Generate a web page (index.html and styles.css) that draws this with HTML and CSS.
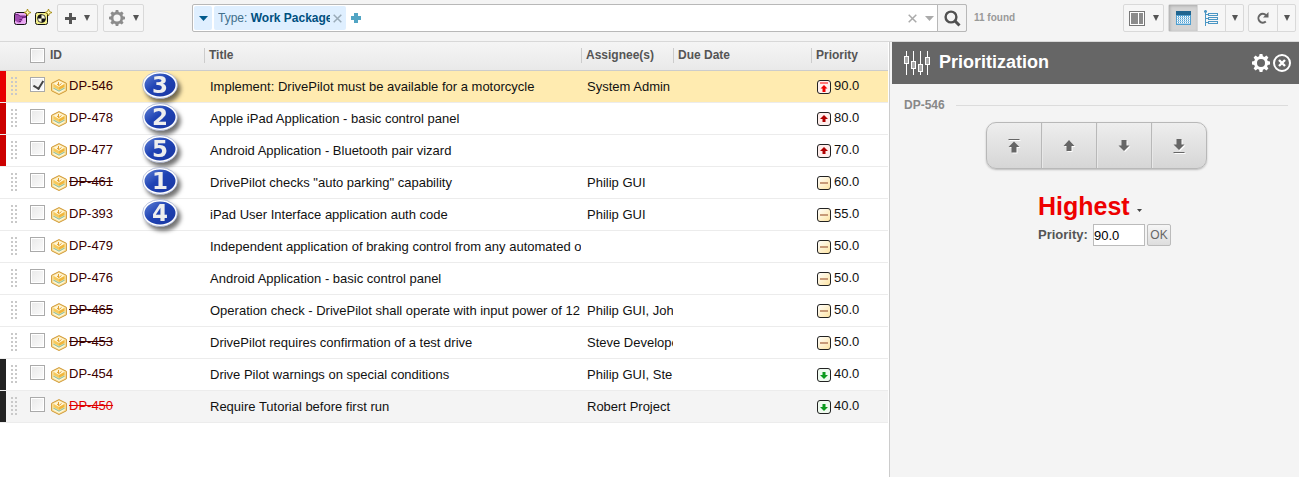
FILE: index.html
```html
<!DOCTYPE html>
<html lang="en">
<head>
<meta charset="utf-8">
<title>Work Packages</title>
<link rel="stylesheet" href="styles.css">
</head>
<body>
<svg class="defs" aria-hidden="true">
  <defs>
    <linearGradient id="blue" x1="0" y1="0" x2="1" y2="1"><stop offset="0" stop-color="#6485d8"/><stop offset=".45" stop-color="#1f43b4"/><stop offset="1" stop-color="#1a36a0"/></linearGradient>
    <linearGradient id="cream" x1="0" y1="0" x2="1" y2="1"><stop offset="0" stop-color="#fff"/><stop offset="1" stop-color="#fde3a0"/></linearGradient>
    <symbol id="box" viewBox="0 0 16 16"><path d="M8 .6 15.400 4.300V11.800L8 15.500.6 11.800V4.300Z" fill="#fbe3a0" stroke="#cf9836"/><path d="M2.500 4.800 8 7.800 13.500 4.800 8 2Z" fill="#fff6da"/><path d="M2.500 5 8 8V11L2.500 8Z" fill="#f6c95c"/><path d="M8 8 13.500 5V8L8 11Z" fill="#f0b63c"/><path d="M2.500 8.500 8 11.500 13.500 8.500V9.700L8 12.700 2.500 9.700Z" fill="#8cc3ae"/><path d="M2.500 10.500 8 13.500 13.500 10.500" stroke="#fffbe8" fill="none"/><path d="M7.500 3V6.500M6 5 8 6.500 10.500 4.500" stroke="#e2a02c" fill="none"/></symbol>
    <symbol id="top" viewBox="0 0 14 14"><rect x=".5" y=".5" width="13" height="13" rx="2.500" fill="#fff0ee" stroke="#222"/><path d="M3 3H11" stroke="#f77" stroke-width="2"/><path d="M7 5 10.500 8.500H8.500V12H5.500V8.500H3.500Z" fill="#e00"/></symbol>
    <symbol id="up" viewBox="0 0 14 14"><rect x=".5" y=".5" width="13" height="13" rx="2.500" fill="#ffeeec" stroke="#222"/><path d="M7 3 11 7H8.500V10H5.500V7H3Z" fill="#b00000"/></symbol>
    <symbol id="mid" viewBox="0 0 14 14"><rect x=".5" y=".5" width="13" height="13" rx="2.500" fill="url(#cream)" stroke="#222"/><path d="M3 7H11" stroke="#c79a78" stroke-width="2"/></symbol>
    <symbol id="down" viewBox="0 0 14 14"><rect x=".5" y=".5" width="13" height="13" rx="2.500" fill="#effaef" stroke="#222"/><path d="M7 11 11 7H8.500V4H5.500V7H3Z" fill="#0a9a1c"/></symbol>
    <symbol id="gear" viewBox="0 0 18 18"><path fill-rule="evenodd" d="M7.600 0h2.800l.5 2.300 1.500.6 2-1.300 2 2-1.300 2 .6 1.500 2.300.5v2.800l-2.300.5-.6 1.500 1.300 2-2 2-2-1.300-1.500.6-.5 2.300H7.600l-.5-2.300-1.500-.6-2 1.300-2-2 1.300-2-.6-1.500L0 10.400V7.600l2.300-.5.6-1.500-1.300-2 2-2 2 1.300 1.500-.6ZM9 5a4 4 0 1 0 0 8 4 4 0 0 0 0-8Z"/></symbol>
    <symbol id="caret" viewBox="0 0 6 6"><path d="M0 0H6L3 6Z"/></symbol>
    <symbol id="grip" viewBox="0 0 6 18"><path d="M1 0V18M5 0V18" stroke="#c9c9c9" stroke-width="2" stroke-dasharray="2 2"/></symbol>
    <symbol id="disc" viewBox="0 0 36 28"><ellipse cx="18" cy="14" rx="16.500" ry="12.500" fill="url(#blue)" stroke="#fff" stroke-width="2"/><ellipse cx="18" cy="14" rx="17.500" ry="13.500" fill="none" stroke="#8e9cc8" stroke-width=".6"/></symbol>
    <symbol id="spark" viewBox="0 0 7 7"><path d="M3.500 0 4.500 2.500 7 3.500 4.500 4.500 3.500 7 2.500 4.500 0 3.500 2.500 2.500Z" fill="#fff8b0" stroke="#9b8000" stroke-width=".8"/></symbol>
  </defs>
</svg>

<header class="toolbar">
  <button class="mini" type="button" aria-label="Pick work package"><svg width="18" height="18"><rect x="1.500" y="3.500" width="12" height="12" rx="2" fill="#eaa8f2" stroke="#111"/><path d="M2 5.500H5L7 7H12.500V8.500H9.500L10.500 9.500 9 10.500 9.500 11.500 8 12.500 7.500 13.500H5L2 11.500Z" fill="#a04cb0"/><path d="M2 5.500H5L7 7H12.500V8.500H9M9 10.500H6.500M8 12.500H6" stroke="#5a1068" stroke-width=".8" fill="none"/><use href="#spark" x="11" y="0" width="7" height="7"/></svg></button>
  <button class="mini" type="button" aria-label="New test"><svg width="18" height="18"><rect x="1.500" y="3.500" width="12" height="12" rx="2" fill="#f3f08a" stroke="#111"/><circle cx="7.500" cy="9.500" r="4" fill="#fffde0" stroke="#111" stroke-width=".8"/><path d="M7.500 9.500V5.500A4 4 0 0 0 3.500 9.500ZM7.500 9.500V13.500A4 4 0 0 0 11.500 9.500Z" fill="#111"/><use href="#spark" x="11" y="0" width="7" height="7"/></svg></button>
  <button class="tool" type="button" aria-label="Add"><svg width="11" height="11"><path d="M4 0H7V4H11V7H7V11H4V7H0V4H4Z" fill="#555"/></svg><svg class="car" width="6" height="6"><use href="#caret"/></svg></button>
  <button class="tool" type="button" aria-label="Settings"><svg width="16" height="16" fill="#8c8c8c"><use href="#gear"/></svg><svg class="car" width="6" height="6"><use href="#caret"/></svg></button>

  <div class="search">
    <button class="chip chip-menu" type="button" aria-label="Saved queries"><svg width="9" height="5"><path d="M0 0H9L4.500 5Z" fill="#005a8c"/></svg></button>
    <div class="chip"><span class="chip-text">Type: <b>Work Package</b></span><button class="bare" type="button" aria-label="Remove filter"><svg width="9" height="9"><path d="M.7.700 8.300 8.300M8.300.700.700 8.300" stroke="#9aabb8" stroke-width="1.500"/></svg></button></div>
    <button class="bare add" type="button" aria-label="Add filter"><svg width="10" height="10"><path d="M3 0H7V3H10V7H7V10H3V7H0V3H3Z" fill="#52a5c4"/></svg></button>
    <input class="query" type="text" aria-label="Search">
    <button class="bare" type="button" aria-label="Clear"><svg width="9" height="9"><path d="M.7.700 8.300 8.300M8.300.700.700 8.300" stroke="#aaa" stroke-width="1.500"/></svg></button>
    <button class="bare history" type="button" aria-label="History"><svg width="9" height="5"><path d="M0 0H9L4.500 5Z" fill="#aaa"/></svg></button>
    <button class="go" type="button" aria-label="Search"><svg width="17" height="17" fill="none" stroke="#505050"><circle cx="7" cy="7" r="5.400" stroke-width="2.400"/><path d="M11 11 15.500 15.500" stroke-width="3"/></svg></button>
  </div>
  <span class="found"><b>11 found</b></span>

  <div class="views">
    <button class="tool" type="button" aria-label="Columns"><svg width="16" height="15"><rect x=".5" y=".5" width="15" height="14" fill="#fff" stroke="#777"/><path d="M2 2H9V13H2ZM10 2H14V13H10Z" fill="#8c8c8c"/></svg><svg class="car" width="6" height="6"><use href="#caret"/></svg></button>
    <div class="group">
      <button class="seg on" type="button" aria-label="Table view"><svg width="15" height="14"><rect width="15" height="14" fill="#4f9fd0"/><rect width="15" height="4" fill="#1f648f"/><path d="M1 5.500H14M1 7.500H14M1 9.500H14M1 11.500H14" stroke="#fff" stroke-dasharray="1 1"/><path d="M1 6.500H14M1 8.500H14M1 10.500H14M1 12.500H14" stroke="#d5ebf8" stroke-width=".7"/></svg></button>
      <button class="seg" type="button" aria-label="Tree view"><svg width="15" height="16" fill="none" stroke="#4a96c4"><path d="M1.500 0V16M1.500 4.500H4M1.500 8.500H4M1.500 12.500H4"/><path d="M0 1.500H3" stroke-width="2"/><rect x="4.500" y="3.500" width="9" height="2"/><rect x="4.500" y="7.500" width="9" height="2"/><rect x="4.500" y="11.500" width="9" height="2"/></svg></button>
      <button class="seg slim" type="button" aria-label="More views"><svg class="car" width="6" height="6"><use href="#caret"/></svg></button>
    </div>
    <div class="group">
      <button class="seg" type="button" aria-label="Refresh"><svg width="12" height="12"><path d="M8.800 9.500A4.400 4.400 0 1 1 9 3.200" fill="none" stroke="#666" stroke-width="2"/><path d="M11.500 0V5.500H6Z" fill="#666"/></svg></button>
      <button class="seg slim" type="button" aria-label="Refresh options"><svg class="car" width="6" height="6"><use href="#caret"/></svg></button>
    </div>
  </div>
</header>

<main class="main">
  <section class="list">
    <table class="grid">
      <colgroup><col class="c-id"><col><col class="c-who"><col class="c-due"><col class="c-pri"></colgroup>
      <thead><tr><th><div class="idh"><input class="tick" type="checkbox" aria-label="Select all"><span>ID</span></div></th><th class="sep">Title</th><th class="sep">Assignee(s)</th><th class="sep">Due Date</th><th class="sep">Priority</th></tr></thead>
      <tbody>
        <tr class="sel red1"><td class="idc"><div class="id"><svg class="grip"><use href="#grip"/></svg><input class="tick" type="checkbox" checked aria-label="DP-546"><svg class="box"><use href="#box"/></svg><a href="#DP-546">DP-546</a></div><span class="step"><svg><use href="#disc"/></svg><b>3</b></span></td><td>Implement: DrivePilot must be available for a motorcycle</td><td>System Admin</td><td></td><td><div class="pri"><svg><use href="#top"/></svg>90.0</div></td></tr>
        <tr class="red2"><td class="idc"><div class="id"><svg class="grip"><use href="#grip"/></svg><input class="tick" type="checkbox" aria-label="DP-478"><svg class="box"><use href="#box"/></svg><a href="#DP-478">DP-478</a></div><span class="step"><svg><use href="#disc"/></svg><b>2</b></span></td><td>Apple iPad Application - basic control panel</td><td></td><td></td><td><div class="pri"><svg><use href="#up"/></svg>80.0</div></td></tr>
        <tr class="red2"><td class="idc"><div class="id"><svg class="grip"><use href="#grip"/></svg><input class="tick" type="checkbox" aria-label="DP-477"><svg class="box"><use href="#box"/></svg><a href="#DP-477">DP-477</a></div><span class="step"><svg><use href="#disc"/></svg><b>5</b></span></td><td>Android Application - Bluetooth pair vizard</td><td></td><td></td><td><div class="pri"><svg><use href="#up"/></svg>70.0</div></td></tr>
        <tr><td class="idc"><div class="id"><svg class="grip"><use href="#grip"/></svg><input class="tick" type="checkbox" aria-label="DP-461"><svg class="box"><use href="#box"/></svg><a class="done" href="#DP-461">DP-461</a></div><span class="step"><svg><use href="#disc"/></svg><b>1</b></span></td><td>DrivePilot checks "auto parking" capability</td><td>Philip GUI</td><td></td><td><div class="pri"><svg><use href="#mid"/></svg>60.0</div></td></tr>
        <tr><td class="idc"><div class="id"><svg class="grip"><use href="#grip"/></svg><input class="tick" type="checkbox" aria-label="DP-393"><svg class="box"><use href="#box"/></svg><a href="#DP-393">DP-393</a></div><span class="step"><svg><use href="#disc"/></svg><b>4</b></span></td><td>iPad User Interface application auth code</td><td>Philip GUI</td><td></td><td><div class="pri"><svg><use href="#mid"/></svg>55.0</div></td></tr>
        <tr><td class="idc"><div class="id"><svg class="grip"><use href="#grip"/></svg><input class="tick" type="checkbox" aria-label="DP-479"><svg class="box"><use href="#box"/></svg><a href="#DP-479">DP-479</a></div></td><td>Independent application of braking control from any automated or</td><td></td><td></td><td><div class="pri"><svg><use href="#mid"/></svg>50.0</div></td></tr>
        <tr><td class="idc"><div class="id"><svg class="grip"><use href="#grip"/></svg><input class="tick" type="checkbox" aria-label="DP-476"><svg class="box"><use href="#box"/></svg><a href="#DP-476">DP-476</a></div></td><td>Android Application - basic control panel</td><td></td><td></td><td><div class="pri"><svg><use href="#mid"/></svg>50.0</div></td></tr>
        <tr><td class="idc"><div class="id"><svg class="grip"><use href="#grip"/></svg><input class="tick" type="checkbox" aria-label="DP-465"><svg class="box"><use href="#box"/></svg><a class="done" href="#DP-465">DP-465</a></div></td><td>Operation check - DrivePilot shall operate with input power of 12</td><td>Philip GUI, John</td><td></td><td><div class="pri"><svg><use href="#mid"/></svg>50.0</div></td></tr>
        <tr><td class="idc"><div class="id"><svg class="grip"><use href="#grip"/></svg><input class="tick" type="checkbox" aria-label="DP-453"><svg class="box"><use href="#box"/></svg><a class="done" href="#DP-453">DP-453</a></div></td><td>DrivePilot requires confirmation of a test drive</td><td>Steve Developer</td><td></td><td><div class="pri"><svg><use href="#mid"/></svg>50.0</div></td></tr>
        <tr class="dark"><td class="idc"><div class="id"><svg class="grip"><use href="#grip"/></svg><input class="tick" type="checkbox" aria-label="DP-454"><svg class="box"><use href="#box"/></svg><a href="#DP-454">DP-454</a></div></td><td>Drive Pilot warnings on special conditions</td><td>Philip GUI, Ste</td><td></td><td><div class="pri"><svg><use href="#down"/></svg>40.0</div></td></tr>
        <tr class="dark hover"><td class="idc"><div class="id"><svg class="grip"><use href="#grip"/></svg><input class="tick" type="checkbox" aria-label="DP-450"><svg class="box"><use href="#box"/></svg><a class="done late" href="#DP-450">DP-450</a></div></td><td>Require Tutorial before first run</td><td>Robert Project</td><td></td><td><div class="pri"><svg><use href="#down"/></svg>40.0</div></td></tr>
      </tbody>
    </table>
  </section>

  <aside class="pane">
    <div class="pane-head">
      <svg width="26" height="24" stroke="#fff" fill="#aaa"><path d="M2.500 0V24M9.500 0V24M16.500 0V24M23.500 0V24"/><rect x=".5" y="5.500" width="4" height="7"/><rect x="7.500" y="10.500" width="4" height="7"/><rect x="14.500" y="13.500" width="4" height="7"/><rect x="21.500" y="6.500" width="4" height="7"/></svg>
      <h2>Prioritization</h2>
      <button class="bare" type="button" aria-label="Panel settings"><svg width="18" height="18" fill="#fff"><use href="#gear"/></svg></button>
      <button class="bare" type="button" aria-label="Close panel"><svg width="18" height="18" fill="none" stroke="#fff"><circle cx="9" cy="9" r="8" stroke-width="2"/><path d="M6 6 12 12M12 6 6 12" stroke-width="2.400"/></svg></button>
    </div>
    <div class="pane-body">
      <h3 class="item">DP-546</h3>
      <div class="moves">
        <button type="button" aria-label="Move to top"><svg width="12" height="14"><path d="M6 2.500 11.500 8H8.500V13.500H3.500V8H.5Z"/><path d="M.5.500H11.500" stroke="#666"/></svg></button>
        <button type="button" aria-label="Move up"><svg width="12" height="12"><path d="M6 0 11.500 6H8.500V11H3.500V6H.5Z"/></svg></button>
        <button type="button" aria-label="Move down"><svg width="12" height="12"><path d="M6 11 11.500 5.500H8.500V0H3.500V5.500H.5Z"/></svg></button>
        <button type="button" aria-label="Move to bottom"><svg width="12" height="14"><path d="M6 11 11.500 5.500H8.500V0H3.500V5.500H.5Z"/><path d="M.5 13.500H11.500" stroke="#666"/></svg></button>
      </div>
      <div class="level">
        <button class="bare highest" type="button">Highest<svg width="5" height="3"><path d="M0 0H5L2.500 3Z" fill="#444"/></svg></button>
        <form class="value"><label for="prio">Priority:</label><input id="prio" type="text" value="90.0"><button type="button">OK</button></form>
      </div>
    </div>
  </aside>
</main>
</body>
</html>
```
FILE: styles.css
```css
* { box-sizing: border-box; }
body { margin: 0; min-height: 100vh; display: flex; flex-direction: column; background: #f4f4f4; font: 13px/16px "Liberation Sans", Arial, sans-serif; color: #111; }
button, input { font: inherit; margin: 0; }
button { display: flex; align-items: center; justify-content: center; padding: 0; flex: none; }
svg { display: block; flex: none; }
.defs { position: absolute; width: 0; height: 0; }
.car { fill: #555; }

.toolbar { display: flex; align-items: center; padding: 4px 3px 9px 13px; border-bottom: 1px solid #d8d8d8; }
.mini, .bare { border: 0; background: none; }
.mini { width: 18px; margin-right: 3px; }
.tool { width: 41px; height: 28px; gap: 8px; background: #f6f6f6; border: 1px solid #d9d9d9; border-radius: 2px; }
.mini + .tool { margin: 0 5px 0 2px; }
.search { flex: 1; min-width: 0; display: flex; align-items: center; height: 28px; margin-left: 48px; padding-left: 1px; gap: 2px; background: #fff; border: 1px solid #b8b8b8; border-radius: 2px; }
.chip { display: flex; align-items: center; width: 132px; height: 24px; flex: none; padding: 0 4px 0 4px; background: #dfefff; color: #42708c; font-size: 12px; border-radius: 2px; }
.chip-menu { width: 18px; border: 0; padding: 0; }
.chip b { color: #00507f; }
.chip-text { flex: 1; overflow: hidden; white-space: nowrap; margin-right: 3px; }
.add { margin-left: 3px; }
.query { flex: 1; min-width: 0; height: 24px; border: 0; outline: 0; background: none; }
.history { margin: 0 1px 0 6px; }
.go { width: 30px; height: 28px; background: #f4f4f4; border: 1px solid #b8b8b8; border-radius: 0 2px 2px 0; margin-right: -1px; }
.found { width: 156px; padding-left: 7px; color: #999; font-size: 10px; }
.views { display: flex; gap: 4px; }
.group { display: flex; border: 1px solid #d9d9d9; border-radius: 2px; background: #f6f6f6; }
.seg { width: 28px; height: 26px; border: 0; background: none; }
.seg + .seg { border-left: 1px solid #d9d9d9; }
.seg.on { background: #d4d4d4; box-shadow: inset 1px 1px 3px #aaa; }
.seg.slim { width: 18px; }

.main { flex: 1; display: flex; }
.list { flex: 1; min-width: 0; padding-right: 1px; background: #fff; border-right: 1px solid #ccc; }
.grid { width: 100%; table-layout: fixed; border-collapse: separate; border-spacing: 0; }
.c-id { width: 204px; }
.c-who { width: 92px; }
.c-due { width: 138px; }
.c-pri { width: 77px; }
th { height: 29px; padding: 0; text-align: left; font-size: 12px; color: #555; background: linear-gradient(#f5f5f5, #e9e9e9); border-bottom: 1px solid #ccc; }
.sep { padding: 0 0 2px; }
.sep::before { content: ""; display: inline-block; width: 1px; height: 15px; margin-right: 4px; vertical-align: middle; background: #ccc; }
.idh { display: flex; align-items: center; gap: 5px; padding: 0 0 2px 30px; }
td { height: 32px; padding: 0 0 0 6px; overflow: hidden; white-space: nowrap; border-bottom: 1px solid #ececec; }
.idc { position: relative; padding: 0; overflow: visible; background-repeat: no-repeat; background-size: 6px 100%; }
.red1 .idc { background-image: linear-gradient(#e80000, #e80000); }
.red2 .idc { background-image: linear-gradient(#c00, #c00); }
.dark .idc { background-image: linear-gradient(#222, #222); }
.idc { background-clip: padding-box; }
.sel td { background-color: #ffebb0; }
.hover td { background-color: #f4f4f4; }
.id { display: flex; align-items: center; padding: 0 0 2px 11px; }
.id .tick { margin-bottom: 2px; }
.grip { width: 6px; height: 18px; margin-right: 13px; }
.box { width: 16px; height: 16px; margin: 3px 2px 0 6px; }
.id a { color: #3b0000; text-decoration: none; }
.id .done { text-decoration: line-through; }
.id .late { color: #e00000; }
.tick { appearance: none; flex: none; width: 15px; height: 15px; border: 1px solid #aaa; background: linear-gradient(135deg, #e9e9e9, #fbfbfb); box-shadow: inset 0 0 0 1px #fff; }
.tick:checked::after { content: ""; display: block; width: 5px; height: 8px; margin: 1px 0 0 4px; border: solid #444; border-width: 0 2px 2px 0; transform: rotate(32deg); }
.step { position: absolute; z-index: 1; left: 142px; top: 0; width: 36px; height: 28px; filter: drop-shadow(3px 4px 2px rgba(0, 0, 0, .55)); }
.step svg { width: 36px; height: 28px; }
.step b { position: absolute; inset: 0; text-align: center; font: bold 23px/28px "DejaVu Sans", sans-serif; color: #eee; }
.pri { display: flex; align-items: center; gap: 3px; padding-bottom: 2px; }
.pri svg { width: 14px; height: 14px; margin-top: 3px; }

.pane { width: 409px; padding-left: 2px; }
.pane-head { display: flex; align-items: center; height: 42px; padding: 0 8px 2px 12px; background: #666; color: #fff; gap: 3px; }
.pane-head svg { margin-top: 1px; }
.pane-head h2 { flex: 1; margin: 0 0 0 6px; font-size: 18px; line-height: 24px; }
.pane-body { padding: 13px 11px 0 12px; }
.item { display: flex; align-items: center; gap: 11px; margin: 0; font-size: 12px; color: #888; }
.item::after { content: ""; flex: 1; height: 1px; background: #dcdcdc; }
.moves { display: flex; width: 221px; height: 47px; margin: 9px auto 0 82px; border: 1px solid #b8b8b8; border-radius: 10px; background: linear-gradient(#eee, #d6d6d6); box-shadow: 0 1px 2px #bbb; }
.moves button { flex: 1; border: 0; background: none; }
.moves button + button { border-left: 1px solid #b8b8b8; box-shadow: inset 1px 0 #e8e8e8; }
.moves svg { fill: #666; filter: drop-shadow(1px 1px 0 #fff); }
.level { padding: 22px 0 0 134px; }
.highest { gap: 7px; color: #ee0000; font-size: 25px; font-weight: bold; line-height: 30px; }
.highest svg { margin-top: 8px; }
.value { display: flex; align-items: center; gap: 2px; margin-top: 3px; }
.value label { width: 53px; font-weight: bold; color: #555; }
.value input { width: 52px; height: 22px; padding: 0; border: 1px solid #bbb; }
.value button { width: 24px; height: 22px; font-size: 12px; color: #666; background: linear-gradient(#f6f6f6, #ddd); border: 1px solid #bbb; border-radius: 2px; }
```
